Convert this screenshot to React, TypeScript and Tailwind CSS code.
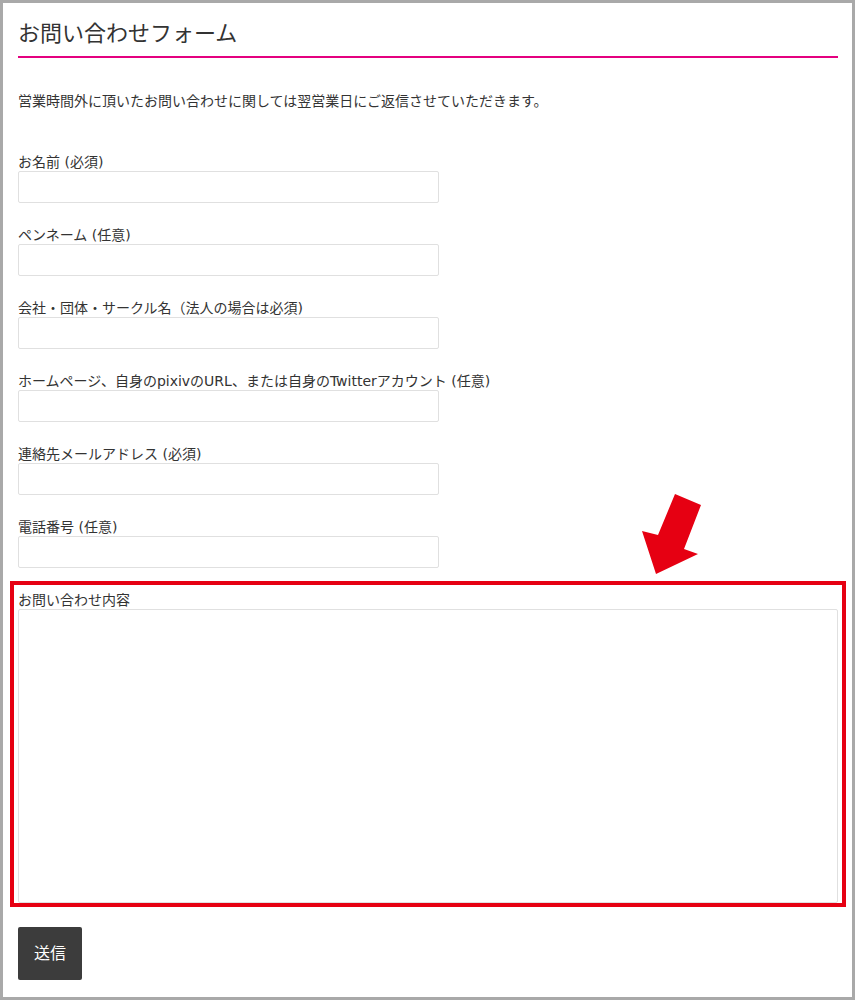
import type { VoidFunctionComponent } from "react";

const fields = [
  "お名前 (必須)",
  "ペンネーム (任意)",
  "会社・団体・サークル名（法人の場合は必須)",
  "ホームページ、自身のpixivのURL、または自身のTwitterアカウント (任意)",
  "連絡先メールアドレス (必須)",
  "電話番号 (任意)",
];

const Arrow: VoidFunctionComponent = () => (
  <svg
    className="absolute left-[637px] top-[489px] pointer-events-none"
    width="64"
    height="84"
    viewBox="0 0 64 84"
  >
    <polygon
      points="35,2 61,13 44,57 58,62 16,82 2,39 18,43"
      fill="#e60012"
    />
  </svg>
);

export default function App() {
  return (
    <div
      className="relative w-[855px] h-[1000px] border-[3px] border-[#a9a9a9] bg-white pl-[15px] pr-[14px] text-[#333]"
      style={{ fontFamily: '"DejaVu Sans", "Noto Sans CJK JP", sans-serif' }}
    >
      <h1 className="pt-[15px] pb-[6px] text-[22px] leading-[32px] border-b-2 border-[#e4007f]">
        お問い合わせフォーム
      </h1>

      <p className="mt-[33px] text-[14px] leading-[20px]">
        営業時間外に頂いたお問い合わせに関しては翌営業日にご返信させていただきます。
      </p>

      <div className="mt-[42px] flex flex-col gap-[23px]">
        {fields.map((label) => (
          <div key={label}>
            <div className="h-[18px] text-[14px] leading-[18px]">{label}</div>
            <input className="block w-[421px] h-[32px] border border-[#e0e0e0] rounded-[2px] bg-white" />
          </div>
        ))}
      </div>

      <div className="mt-[13px] mx-[-8px] border-4 border-[#e60012] pt-[6px] px-[4px]">
        <div className="h-[18px] text-[14px] leading-[18px]">お問い合わせ内容</div>
        <textarea className="block w-full h-[294px] border border-[#e0e0e0] rounded-[2px] resize-none" />
      </div>

      <button className="mt-[20px] w-[64px] h-[53px] bg-[#3c3c3c] rounded-[2px] text-white text-[16px]">
        送信
      </button>

      <Arrow />
    </div>
  );
}
